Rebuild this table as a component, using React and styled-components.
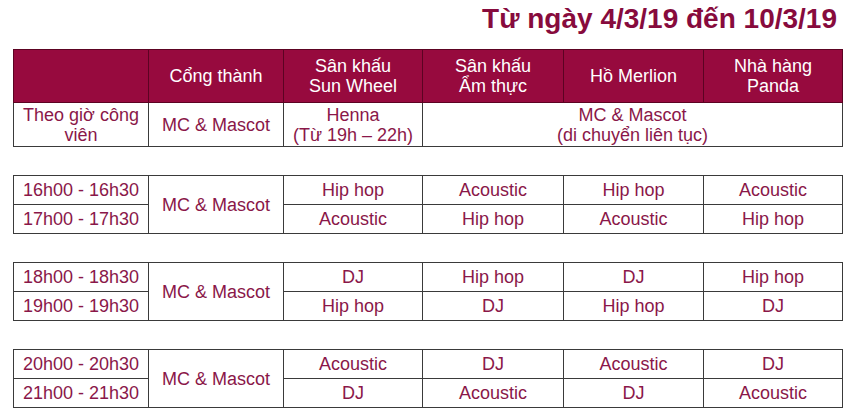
import styled, { createGlobalStyle } from "styled-components";

const GlobalStyle = createGlobalStyle`
  html, body {
    margin: 0;
    padding: 0;
    background: #ffffff;
  }
  body {
    font-family: "Liberation Sans", Arial, sans-serif;
  }
`;

const Page = styled.div`
  width: 853px;
  height: 411px;
  padding: 2px 11px 0 13px;
  box-sizing: border-box;
  overflow: hidden;
`;

const Title = styled.h1`
  margin: 0 0 13px;
  padding-right: 5px;
  text-align: right;
  font-size: 28px;
  line-height: 34px;
  font-weight: 700;
  color: #870b3d;
`;

const Table = styled.table`
  width: 829px;
  border-collapse: collapse;
  table-layout: fixed;
  margin-top: ${(p) => (p.$gap ? "28px" : "0")};
`;

const HeadCell = styled.th`
  height: 52px;
  padding: 0;
  background: #970a3e;
  color: #ffffff;
  font-weight: 400;
  font-size: 18px;
  line-height: 20px;
  text-align: center;
  vertical-align: middle;
  border: 1px solid #5c0322;
`;

const Cell = styled.td`
  height: ${(p) => p.$h || 28}px;
  padding: 0;
  color: #8a1749;
  font-size: 18px;
  line-height: 20px;
  text-align: center;
  vertical-align: middle;
  border: 1px solid #3a3a3a;
  white-space: nowrap;
`;

const widths = [135, 135, 139, 141, 140, 139];

const Cols = () => (
  <colgroup>
    {widths.map((w, i) => (
      <col key={i} style={{ width: w }} />
    ))}
  </colgroup>
);

const blocks = [
  [
    ["16h00 - 16h30", "Hip hop", "Acoustic", "Hip hop", "Acoustic"],
    ["17h00 - 17h30", "Acoustic", "Hip hop", "Acoustic", "Hip hop"],
  ],
  [
    ["18h00 - 18h30", "DJ", "Hip hop", "DJ", "Hip hop"],
    ["19h00 - 19h30", "Hip hop", "DJ", "Hip hop", "DJ"],
  ],
  [
    ["20h00 - 20h30", "Acoustic", "DJ", "Acoustic", "DJ"],
    ["21h00 - 21h30", "DJ", "Acoustic", "DJ", "Acoustic"],
  ],
];

export default function App() {
  return (
    <Page>
      <GlobalStyle />
      <Title>Từ ngày 4/3/19 đến 10/3/19</Title>
      <Table>
        <Cols />
        <thead>
          <tr>
            <HeadCell></HeadCell>
            <HeadCell>Cổng thành</HeadCell>
            <HeadCell>
              Sân khấu
              <br />
              Sun Wheel
            </HeadCell>
            <HeadCell>
              Sân khấu
              <br />
              Ẩm thực
            </HeadCell>
            <HeadCell>Hồ Merlion</HeadCell>
            <HeadCell>
              Nhà hàng
              <br />
              Panda
            </HeadCell>
          </tr>
        </thead>
        <tbody>
          <tr>
            <Cell $h={43}>
              Theo giờ công
              <br />
              viên
            </Cell>
            <Cell $h={43}>MC &amp; Mascot</Cell>
            <Cell $h={43}>
              Henna
              <br />
              (Từ 19h – 22h)
            </Cell>
            <Cell $h={43} colSpan={3}>
              MC &amp; Mascot
              <br />
              (di chuyển liên tục)
            </Cell>
          </tr>
        </tbody>
      </Table>
      {blocks.map((rows, b) => (
        <Table key={b} $gap>
          <Cols />
          <tbody>
            {rows.map((r, i) => (
              <tr key={i}>
                <Cell>{r[0]}</Cell>
                {i === 0 && <Cell rowSpan={2}>MC &amp; Mascot</Cell>}
                {r.slice(1).map((v, j) => (
                  <Cell key={j}>{v}</Cell>
                ))}
              </tr>
            ))}
          </tbody>
        </Table>
      ))}
    </Page>
  );
}
